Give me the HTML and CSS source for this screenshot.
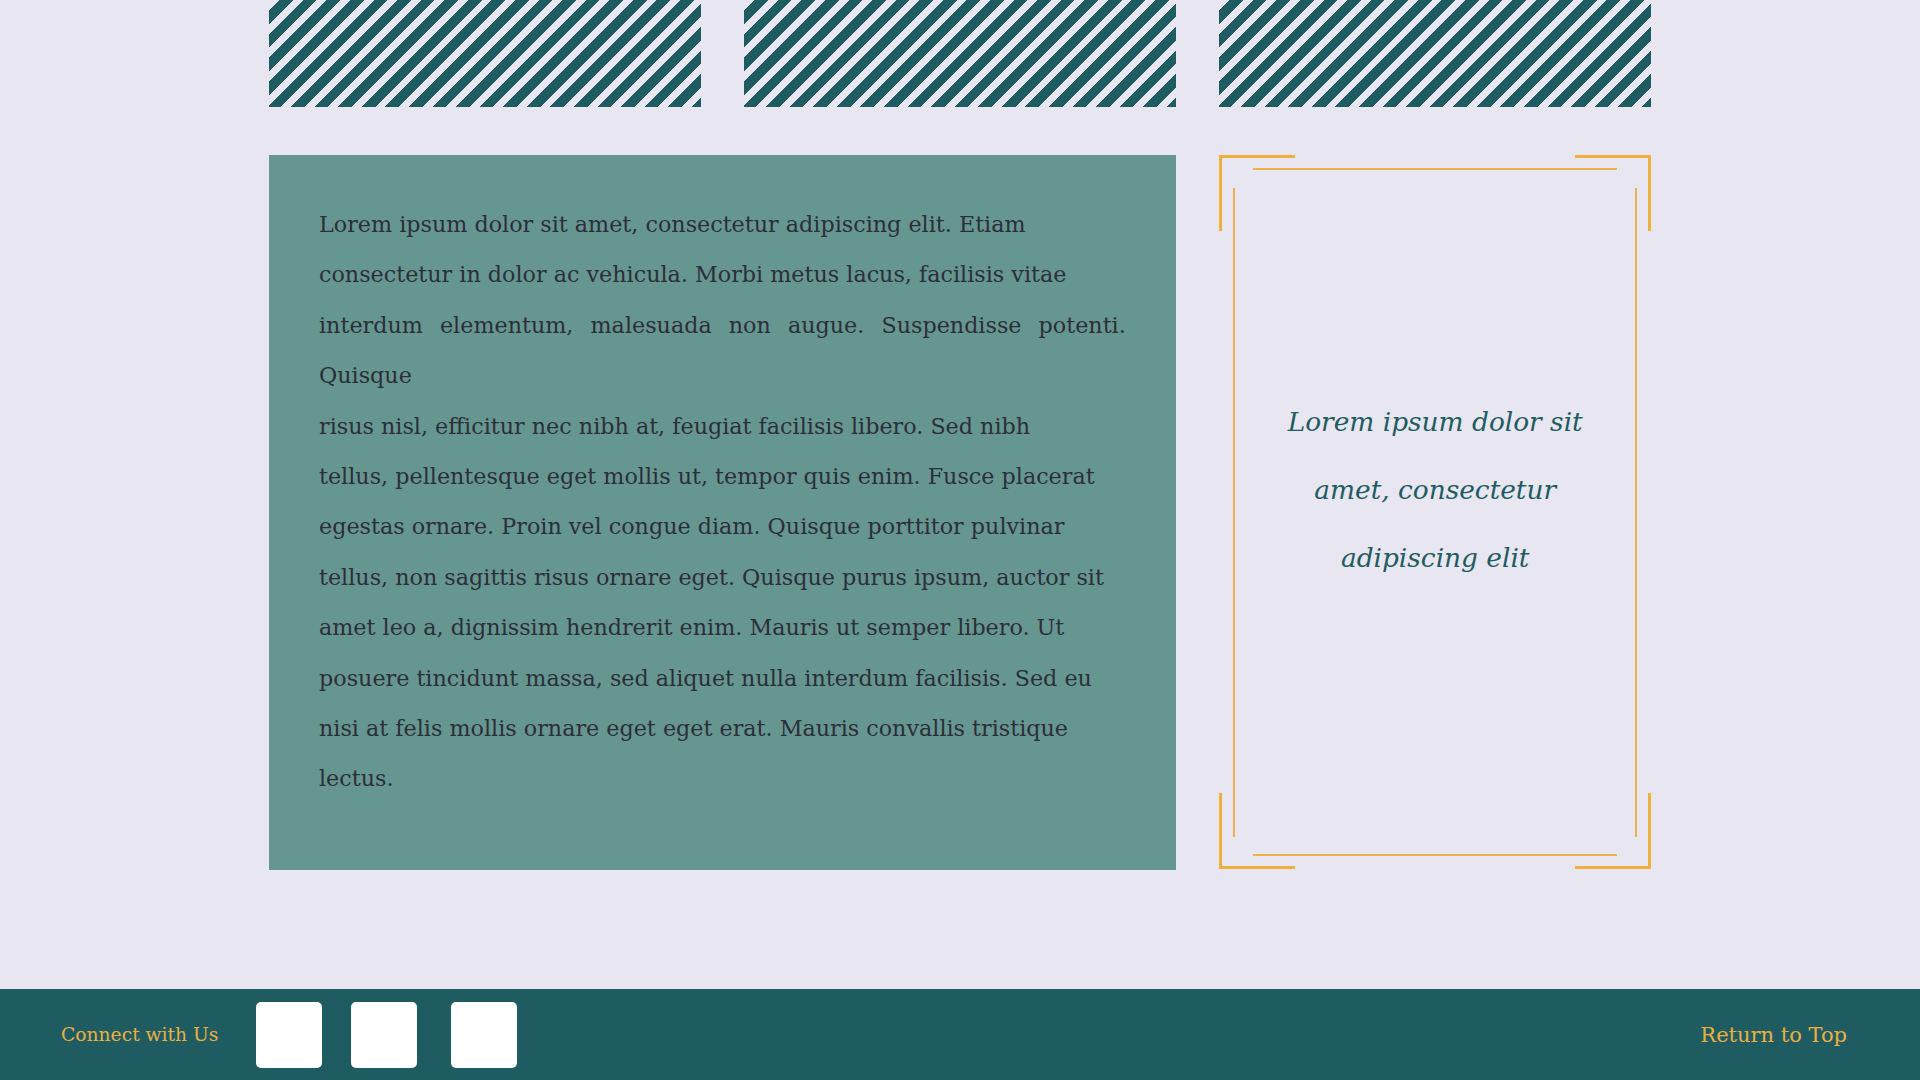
FILE: index.html
```html
<!DOCTYPE html>
<html lang="en">
<head>
<meta charset="utf-8">
<title>Lorem</title>
<link rel="stylesheet" href="styles.css">
</head>
<body>
<main class="page">
  <section class="stripes">
    <div class="stripe-block"></div>
    <div class="stripe-block"></div>
    <div class="stripe-block"></div>
  </section>
  <section class="content">
    <article class="text-card">
      <p class="body-text">Lorem ipsum dolor sit amet, consectetur adipiscing elit. Etiam<br>
consectetur in dolor ac vehicula. Morbi metus lacus, facilisis vitae<br>
interdum elementum, malesuada non augue. Suspendisse potenti. Quisque<br>
risus nisl, efficitur nec nibh at, feugiat facilisis libero. Sed nibh<br>
tellus, pellentesque eget mollis ut, tempor quis enim. Fusce placerat<br>
egestas ornare. Proin vel congue diam. Quisque porttitor pulvinar<br>
tellus, non sagittis risus ornare eget. Quisque purus ipsum, auctor sit<br>
amet leo a, dignissim hendrerit enim. Mauris ut semper libero. Ut<br>
posuere tincidunt massa, sed aliquet nulla interdum facilisis. Sed eu<br>
nisi at felis mollis ornare eget eget erat. Mauris convallis tristique<br>
lectus.</p>
    </article>
    <aside class="quote-card">
      <span class="corner corner-tl"></span>
      <span class="corner corner-tr"></span>
      <span class="corner corner-bl"></span>
      <span class="corner corner-br"></span>
      <p class="quote">Lorem ipsum dolor sit amet, consectetur adipiscing elit</p>
    </aside>
  </section>
</main>
<footer class="site-footer">
  <div class="connect">
    <span class="connect-label">Connect with Us</span>
    <a class="social social-one" href="#"></a>
    <a class="social social-two" href="#"></a>
    <a class="social social-three" href="#"></a>
  </div>
  <a class="to-top" href="#">Return to Top</a>
</footer>
</body>
</html>
```
FILE: styles.css
```css
html, body {
  margin: 0;
  padding: 0;
}

body {
  background: #e8e6f1;
  font-family: "DejaVu Serif", "Liberation Serif", serif;
  height: 1080px;
  display: flex;
  flex-direction: column;
  overflow: hidden;
}

.page {
  width: 1382px;
  margin: 0 auto;
  flex: 1;
}

.stripes {
  display: grid;
  grid-template-columns: repeat(3, 1fr);
  column-gap: 43.6px;
}

.stripe-block {
  height: 107px;
  background: repeating-linear-gradient(135deg,
    #1f5c62 0 0.6px,
    transparent 0.6px 7.6px,
    #1f5c62 7.6px 16.67px);
}

.content {
  display: grid;
  grid-template-columns: repeat(3, 1fr);
  column-gap: 43.6px;
  margin-top: 48px;
}

.text-card {
  grid-column: span 2;
  background: #669690;
  padding: 44px 50px 66px 50px;
  height: 715px;
  box-sizing: border-box;
}

.body-text {
  margin: 0;
  font-size: 22.25px;
  line-height: 50.4px;
  color: #2c2e3a;
  text-align: justify;
}

.quote-card {
  position: relative;
  display: flex;
  align-items: center;
  justify-content: center;
  height: 714px;
}

.quote-card::before {
  content: "";
  position: absolute;
  top: 13px;
  bottom: 13px;
  left: 34px;
  right: 34px;
  border-top: 2px solid #efb24a;
  border-bottom: 2px solid #efb24a;
}

.quote-card::after {
  content: "";
  position: absolute;
  top: 33px;
  bottom: 32px;
  left: 14px;
  right: 14px;
  border-left: 2px solid #efb24a;
  border-right: 2px solid #efb24a;
}

.corner {
  position: absolute;
  width: 73px;
  height: 73px;
  border: 0 solid #f0b03e;
}

.corner-tl { top: 0; left: 0; border-top-width: 3px; border-left-width: 3px; }
.corner-tr { top: 0; right: 0; border-top-width: 3px; border-right-width: 3px; }
.corner-bl { bottom: 0; left: 0; border-bottom-width: 3px; border-left-width: 3px; }
.corner-br { bottom: 0; right: 0; border-bottom-width: 3px; border-right-width: 3px; }

.quote {
  margin: 0 0 44px 0;
  max-width: 330px;
  text-align: center;
  font-style: italic;
  font-size: 26.4px;
  line-height: 68px;
  color: #1f5c62;
}

.site-footer {
  height: 91px;
  flex: none;
  background: #1f5c62;
  display: flex;
  align-items: center;
  justify-content: space-between;
  padding: 0 73px 0 61px;
}

.connect {
  display: flex;
  align-items: center;
}

.connect-label {
  font-size: 18.7px;
  color: #ebaf40;
  margin-right: 38px;
}

.social {
  display: block;
  width: 66px;
  height: 66px;
  background: #ffffff;
  border-radius: 5px;
}

.social-two { margin-left: 29px; }
.social-three { margin-left: 34px; }

.to-top {
  font-size: 21px;
  color: #ebaf40;
  text-decoration: none;
}
```
